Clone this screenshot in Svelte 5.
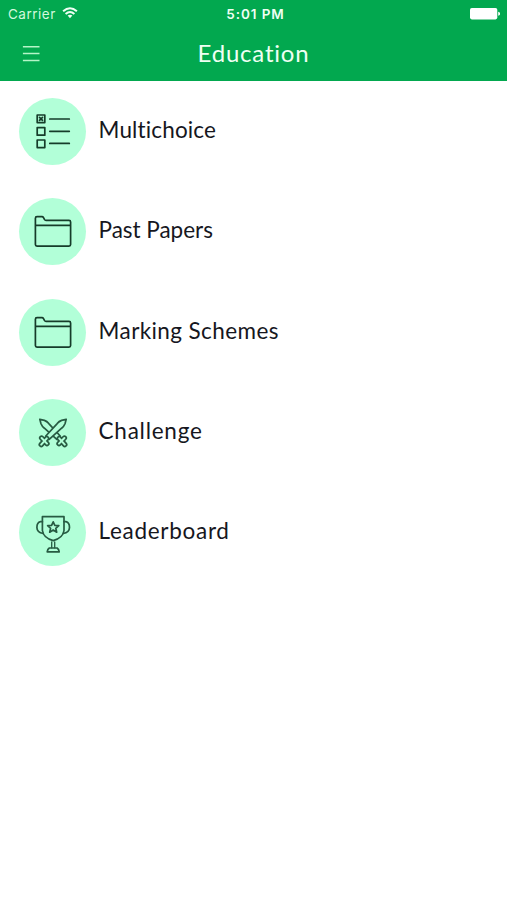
<script>
    const items = [
        { title: 'Multichoice', icon: 'checklist', spacing: 0.14 },
        { title: 'Past Papers', icon: 'folder', spacing: -0.03 },
        { title: 'Marking Schemes', icon: 'folder', spacing: 0.4 },
        { title: 'Challenge', icon: 'swords', spacing: 0.75 },
        { title: 'Leaderboard', icon: 'trophy', spacing: 0.7 }
    ];
</script>

{#snippet sword()}
    <path d="M47.2 20.4 L42.6 21.4 Q40 22.3 38.2 24.6 L26.8 37 L30.2 40.4 L42.6 29.2 Q45 27.4 46 24.8 Z" class="blade" />
    <path d="M22.6 39 L28 44.6 M27.8 39.4 L22.2 45.6" class="hilt" />
    <path d="M22.6 39 L28 44.6 M27.8 39.4 L22.2 45.6" class="hilt-inner" />
{/snippet}

<header>
    <div class="status">
        <div class="carrier">
            <span>Carrier</span>
            <svg width="16" height="12" viewBox="0 0 16 12">
                <path d="M1.1 4.2 Q8 -1.8 14.9 4.2" />
                <path d="M3.6 6.9 Q8 3.2 12.4 6.9" />
                <path d="M5.6 8.6 Q8 6.7 10.4 8.6 L8 11.2 Z" class="dot" />
            </svg>
        </div>
        <span class="time">5:01 PM</span>
        <svg class="battery" width="30" height="12" viewBox="0 0 30 12">
            <rect x="0" y="0" width="27.3" height="11.4" rx="1.8" />
            <path d="M28.2 3.7 Q30.1 4.2 30.1 5.8 Q30.1 7.2 28.2 7.7 Z" />
        </svg>
    </div>
    <nav>
        <button aria-label="Menu">
            <svg width="18" height="18" viewBox="0 0 18 18">
                <path d="M0.9 1.8 H17.5 M0.9 8.5 H17.5 M0.9 15.4 H17.5" />
            </svg>
        </button>
        <h1>Education</h1>
    </nav>
</header>

<ul>
    {#each items as item}
        <li>
            <div class="icon">
                <svg class={item.icon} viewBox="0 0 67 67">
                    {#if item.icon === 'checklist'}
                        <rect x="18.2" y="17" width="7.6" height="7.6" />
                        <rect x="18.2" y="29.6" width="7.6" height="7.6" />
                        <rect x="18.2" y="42" width="7.6" height="7.6" />
                        <path d="M20.5 19.3 L23.5 22.3 M23.5 19.3 L20.5 22.3 M30.8 21 H50.3 M30.8 33.3 H50.3 M30.8 45.4 H50.3" />
                    {:else if item.icon === 'folder'}
                        <path d="M18 18.6 H23 Q24 18.6 24.5 19.6 L25.6 21.7 Q26 22.4 27 22.4 H50 Q51.6 22.4 51.6 24 V46.6 Q51.6 48.2 50 48.2 H18 Q16.4 48.2 16.4 46.6 V20.2 Q16.4 18.6 18 18.6 Z M16.4 27.3 H51.6" />
                    {:else if item.icon === 'swords'}
                        <g transform="translate(68 0) scale(-1 1)">
                            {@render sword()}
                        </g>
                        {@render sword()}
                    {:else}
                        <path d="M23.4 17.7 H45 V31.5 Q44 39 34.2 41.6 Q24.4 39 23.4 31.5 Z" />
                        <path d="M23.4 22.7 H21.5 Q17.9 23.5 17.9 28.5 Q18 33.5 24.2 34.5 M45 22.7 H46.9 Q50.5 23.5 50.5 28.5 Q50.4 33.5 44.2 34.5" />
                        <path d="M34.2 22.8 L35.8 26.3 L39.8 26.7 L36.8 29.3 L37.7 33.2 L34.2 31.1 L30.7 33.2 L31.6 29.3 L28.6 26.7 L32.6 26.3 Z" />
                        <path d="M32.7 43 V48.8 M35.7 43 V48.8" class="thin" />
                        <path d="M30.3 49 H38.1 Q39.9 50.2 40.2 52.8 H28.2 Q28.5 50.2 30.3 49 Z" />
                    {/if}
                </svg>
            </div>
            <span class="label" style="--spacing: {item.spacing}px">{item.title}</span>
        </li>
    {/each}
</ul>

<style>
    :global(body) {
        margin: 0;
        background: #fff;
    }
    header {
        height: 81px;
        background: #02a84f;
        color: #effff3;
    }
    .status {
        display: grid;
        grid-template-columns: 1fr auto 1fr;
        align-items: center;
        height: 27px;
        padding: 0 7px 0 8px;
        font: 13.5px/27px Inter, sans-serif;
    }
    .carrier {
        display: flex;
        align-items: center;
        gap: 6px;
        padding-top: 1px;
        line-height: 26px;
        letter-spacing: 0.5px;
        color: #d3f9dd;
    }
    .carrier svg {
        margin-top: -2px;
        fill: none;
        stroke: #effff3;
        stroke-width: 2;
    }
    .carrier .dot {
        fill: #effff3;
        stroke: none;
    }
    .time {
        padding: 1px 0 0 3px;
        font-weight: 600;
        line-height: 26px;
        letter-spacing: 0.9px;
    }
    .battery {
        justify-self: end;
        fill: #fff;
    }
    nav {
        display: grid;
        grid-template-columns: 1fr auto 1fr;
        align-items: center;
        height: 53px;
    }
    button {
        display: flex;
        margin: 0 0 0 22px;
        padding: 0;
        border: 0;
        background: none;
    }
    button svg {
        stroke: #b5f5c8;
        stroke-width: 1.5;
    }
    h1 {
        margin: 0;
        font: 400 24px/51px Lato, sans-serif;
        letter-spacing: 0.8px;
        padding-bottom: 2px;
    }
    ul {
        display: flex;
        flex-direction: column;
        gap: 33.2px;
        margin: 0;
        padding: 17.2px 19.3px;
        list-style: none;
    }
    li {
        display: flex;
        align-items: center;
        gap: 12.3px;
        height: 67px;
    }
    .icon {
        flex: none;
        width: 67px;
        height: 67px;
        border-radius: 50%;
        background: #b2ffd8;
    }
    .icon svg {
        display: block;
        fill: none;
        stroke: #163c2a;
        stroke-width: 1.7;
        stroke-linejoin: round;
        stroke-linecap: round;
    }
    .icon .swords, .icon .trophy {
        stroke: #275b42;
    }
    .icon .thin {
        stroke-width: 1.3;
    }
    .icon .blade {
        fill: #b2ffd8;
    }
    .icon .hilt {
        stroke-width: 5.4;
    }
    .icon .hilt-inner {
        stroke: #b2ffd8;
        stroke-width: 2;
    }
    .label {
        padding-bottom: 3px;
        font: 400 22.5px/30px Lato, sans-serif;
        letter-spacing: var(--spacing);
        color: #16171e;
    }
</style>
